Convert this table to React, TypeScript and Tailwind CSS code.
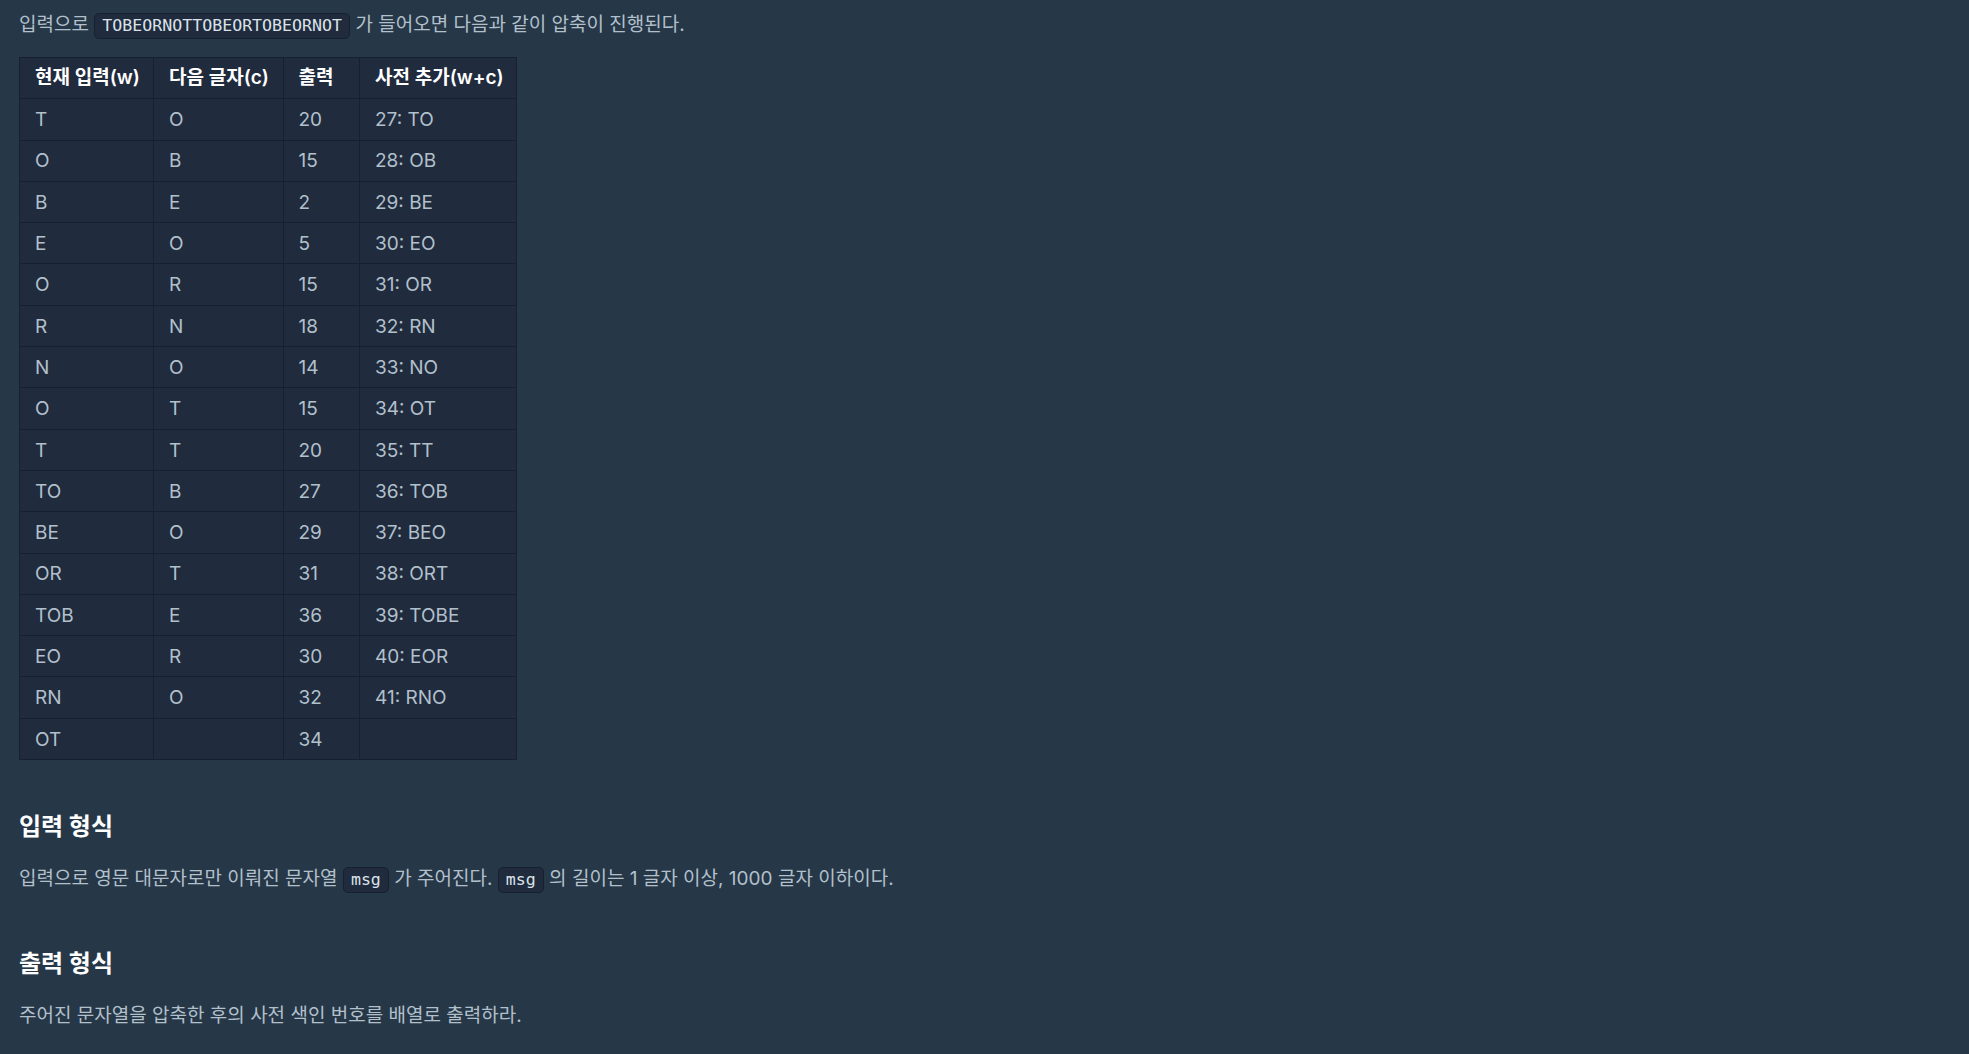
import React from "react";

const rows: [string, string, string, string][] = [
  ["T", "O", "20", "27: TO"],
  ["O", "B", "15", "28: OB"],
  ["B", "E", "2", "29: BE"],
  ["E", "O", "5", "30: EO"],
  ["O", "R", "15", "31: OR"],
  ["R", "N", "18", "32: RN"],
  ["N", "O", "14", "33: NO"],
  ["O", "T", "15", "34: OT"],
  ["T", "T", "20", "35: TT"],
  ["TO", "B", "27", "36: TOB"],
  ["BE", "O", "29", "37: BEO"],
  ["OR", "T", "31", "38: ORT"],
  ["TOB", "E", "36", "39: TOBE"],
  ["EO", "R", "30", "40: EOR"],
  ["RN", "O", "32", "41: RNO"],
  ["OT", "", "34", ""],
];

function Code({ children }: { children: React.ReactNode }) {
  return (
    <code className="inline-block h-[26px] rounded-[5px] border border-[#172030] bg-[#202b3d] px-[7px] align-middle font-['DejaVu_Sans_Mono',monospace] text-[16.6px] leading-[24px] text-[#dbe2ea]">
      {children}
    </code>
  );
}

export default function App() {
  return (
    <div className="min-h-[1054px] w-full bg-[#263747] pl-[19px] pt-[11px] font-['Inter','Noto_Sans_CJK_KR',sans-serif] text-[19px] text-[#b2c0cc]">
      <p className="h-[28px] leading-[28px]">
        입력으로 <Code>TOBEORNOTTOBEORTOBEORNOT</Code> 가 들어오면 다음과 같이 압축이 진행된다.
      </p>

      <table className="mt-[18px] w-[497px] table-fixed border-collapse border border-[#172030] bg-[#202b3d]">
        <colgroup>
          <col className="w-[134px]" />
          <col className="w-[129.5px]" />
          <col className="w-[76.5px]" />
          <col className="w-[157px]" />
        </colgroup>
        <thead>
          <tr className="h-[41.3px]">
            <th className="whitespace-nowrap border border-[#172030] px-[15px] text-left font-semibold text-white">현재 입력(w)</th>
            <th className="whitespace-nowrap border border-[#172030] px-[15px] text-left font-semibold text-white">다음 글자(c)</th>
            <th className="whitespace-nowrap border border-[#172030] px-[15px] text-left font-semibold text-white">출력</th>
            <th className="whitespace-nowrap border border-[#172030] px-[15px] text-left font-semibold text-white">사전 추가(w+c)</th>
          </tr>
        </thead>
        <tbody>
          {rows.map((r, i) => (
            <tr key={i} className="h-[41.3px]">
              {r.map((c, j) => (
                <td key={j} className="whitespace-nowrap border border-[#172030] px-[15px] pt-[2px] text-left">
                  {c}
                </td>
              ))}
            </tr>
          ))}
        </tbody>
      </table>

      <h5 className="mt-[52px] h-[30px] text-[24px] font-bold leading-[30px] text-white">입력 형식</h5>
      <p className="mt-[23px] h-[28px] leading-[28px]">
        입력으로 영문 대문자로만 이뤄진 문자열 <Code>msg</Code> 가 주어진다. <Code>msg</Code> 의 길이는 1 글자 이상, 1000 글자 이하이다.
      </p>

      <h5 className="mt-[56px] h-[30px] text-[24px] font-bold leading-[30px] text-white">출력 형식</h5>
      <p className="mt-[23px] h-[28px] leading-[28px]">
        주어진 문자열을 압축한 후의 사전 색인 번호를 배열로 출력하라.
      </p>
    </div>
  );
}
